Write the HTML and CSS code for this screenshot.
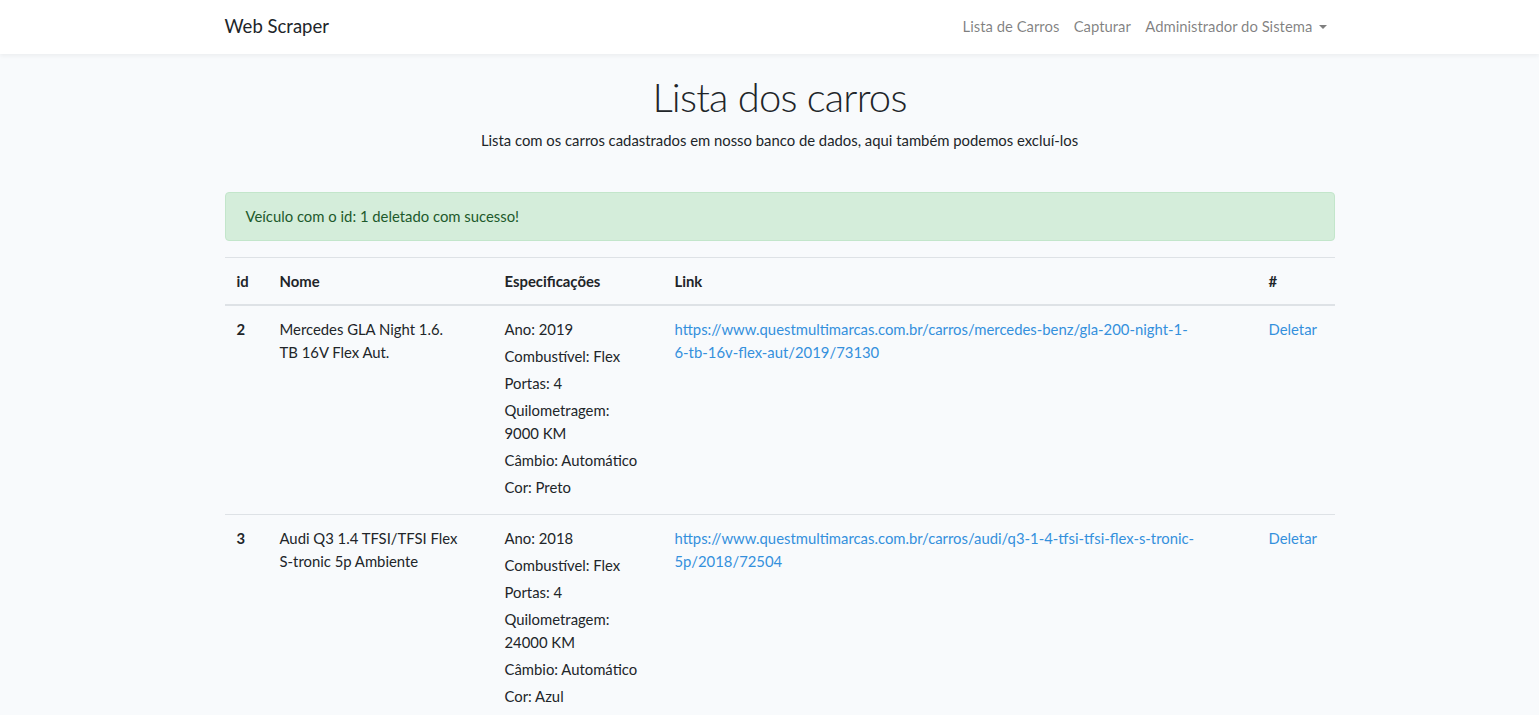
FILE: index.html
```html
<!DOCTYPE html>
<html lang="pt-BR">
<head>
<meta charset="utf-8">
<title>Web Scraper</title>
<link rel="stylesheet" href="styles.css">
</head>
<body>
<nav class="navbar">
  <div class="container nav-inner">
    <a class="brand" href="#">Web Scraper</a>
    <ul class="nav-links">
      <li><a href="#">Lista de Carros</a></li>
      <li><a href="#">Capturar</a></li>
      <li><a href="#" class="dropdown">Administrador do Sistema<span class="caret"></span></a></li>
    </ul>
  </div>
</nav>
<main class="container main">
  <h1 class="title">Lista dos carros</h1>
  <p class="lead">Lista com os carros cadastrados em nosso banco de dados, aqui também podemos excluí-los</p>
  <div class="alert">Veículo com o id: 1 deletado com sucesso!</div>
  <table class="table">
    <colgroup>
      <col class="c-id"><col class="c-nome"><col class="c-spec"><col class="c-link"><col class="c-act">
    </colgroup>
    <thead>
      <tr><th>id</th><th>Nome</th><th>Especificações</th><th>Link</th><th>#</th></tr>
    </thead>
    <tbody>
      <tr>
        <th>2</th>
        <td>Mercedes GLA Night 1.6.<br>TB 16V Flex Aut.</td>
        <td>
          <div class="spec">Ano: 2019</div>
          <div class="spec">Combustível: Flex</div>
          <div class="spec">Portas: 4</div>
          <div class="spec">Quilometragem:<br>9000 KM</div>
          <div class="spec">Câmbio: Automático</div>
          <div class="spec">Cor: Preto</div>
        </td>
        <td><a href="#">https://www.questmultimarcas.com.br/carros/mercedes-benz/gla-200-night-1-<br>6-tb-16v-flex-aut/2019/73130</a></td>
        <td><a href="#">Deletar</a></td>
      </tr>
      <tr>
        <th>3</th>
        <td>Audi Q3 1.4 TFSI/TFSI Flex<br>S-tronic 5p Ambiente</td>
        <td>
          <div class="spec">Ano: 2018</div>
          <div class="spec">Combustível: Flex</div>
          <div class="spec">Portas: 4</div>
          <div class="spec">Quilometragem:<br>24000 KM</div>
          <div class="spec">Câmbio: Automático</div>
          <div class="spec">Cor: Azul</div>
        </td>
        <td><a href="#">https://www.questmultimarcas.com.br/carros/audi/q3-1-4-tfsi-tfsi-flex-s-tronic-<br>5p/2018/72504</a></td>
        <td><a href="#">Deletar</a></td>
      </tr>
    </tbody>
  </table>
</main>
</body>
</html>
```

FILE: styles.css
```css
* { box-sizing: border-box; }
html, body { margin: 0; padding: 0; }
body {
  background: #f8fafc;
  color: #212529;
  font-family: Lato, "Noto Sans", sans-serif;
  font-size: 14.85px;
  line-height: 23px;
}
a { color: #3490dc; text-decoration: none; }
.container {
  width: 1130px;
  margin: 0 auto;
  padding-left: 20px;
}
.navbar {
  background: #fff;
  box-shadow: 0 2px 4px rgba(0,0,0,.05);
  height: 54px;
}
.nav-inner {
  display: flex;
  align-items: center;
  justify-content: space-between;
  height: 54px;
}
.brand {
  color: #212529;
  font-size: 18.5px;
  line-height: 27px;
  padding-bottom: 1px;
}
.nav-links {
  display: flex;
  list-style: none;
  margin: 0;
  padding: 0;
}
.nav-links a {
  color: rgba(0,0,0,.5);
  padding: 8px 7.2px 9px;
  display: block;
}
.caret {
  display: inline-block;
  margin-left: 7px;
  vertical-align: 3px;
  border-top: 4.5px solid;
  border-left: 4.5px solid transparent;
  border-right: 4.5px solid transparent;
}
.main { padding-top: 19px; padding-bottom: 24px; }
.title {
  text-align: center;
  font-size: 40px;
  font-weight: 300;
  line-height: 48px;
  letter-spacing: -0.8px;
  margin: 0 0 8px;
}
.lead {
  text-align: center;
  margin: 0 0 40px;
}
.alert {
  background: #d4edda;
  border: 1px solid #c3e6cb;
  color: #1d5a2c;
  border-radius: 4px;
  padding: 12px 20px;
  margin-bottom: 16px;
}
.table {
  width: 100%;
  border-collapse: collapse;
  table-layout: fixed;
}
.c-id { width: 43px; }
.c-nome { width: 225px; }
.c-spec { width: 170px; }
.c-link { width: 594px; }
.c-act { width: 78px; }
.table th, .table td {
  padding: 12px;
  vertical-align: top;
  text-align: left;
  border-top: 1px solid #dee2e6;
}
.table thead th {
  border-bottom: 2px solid #dee2e6;
  font-weight: 700;
  padding-bottom: 11px;
}
.table tbody th { font-weight: 700; }
.table tbody td { padding-bottom: 11px; }
.spec { margin-bottom: 4px; }
```
